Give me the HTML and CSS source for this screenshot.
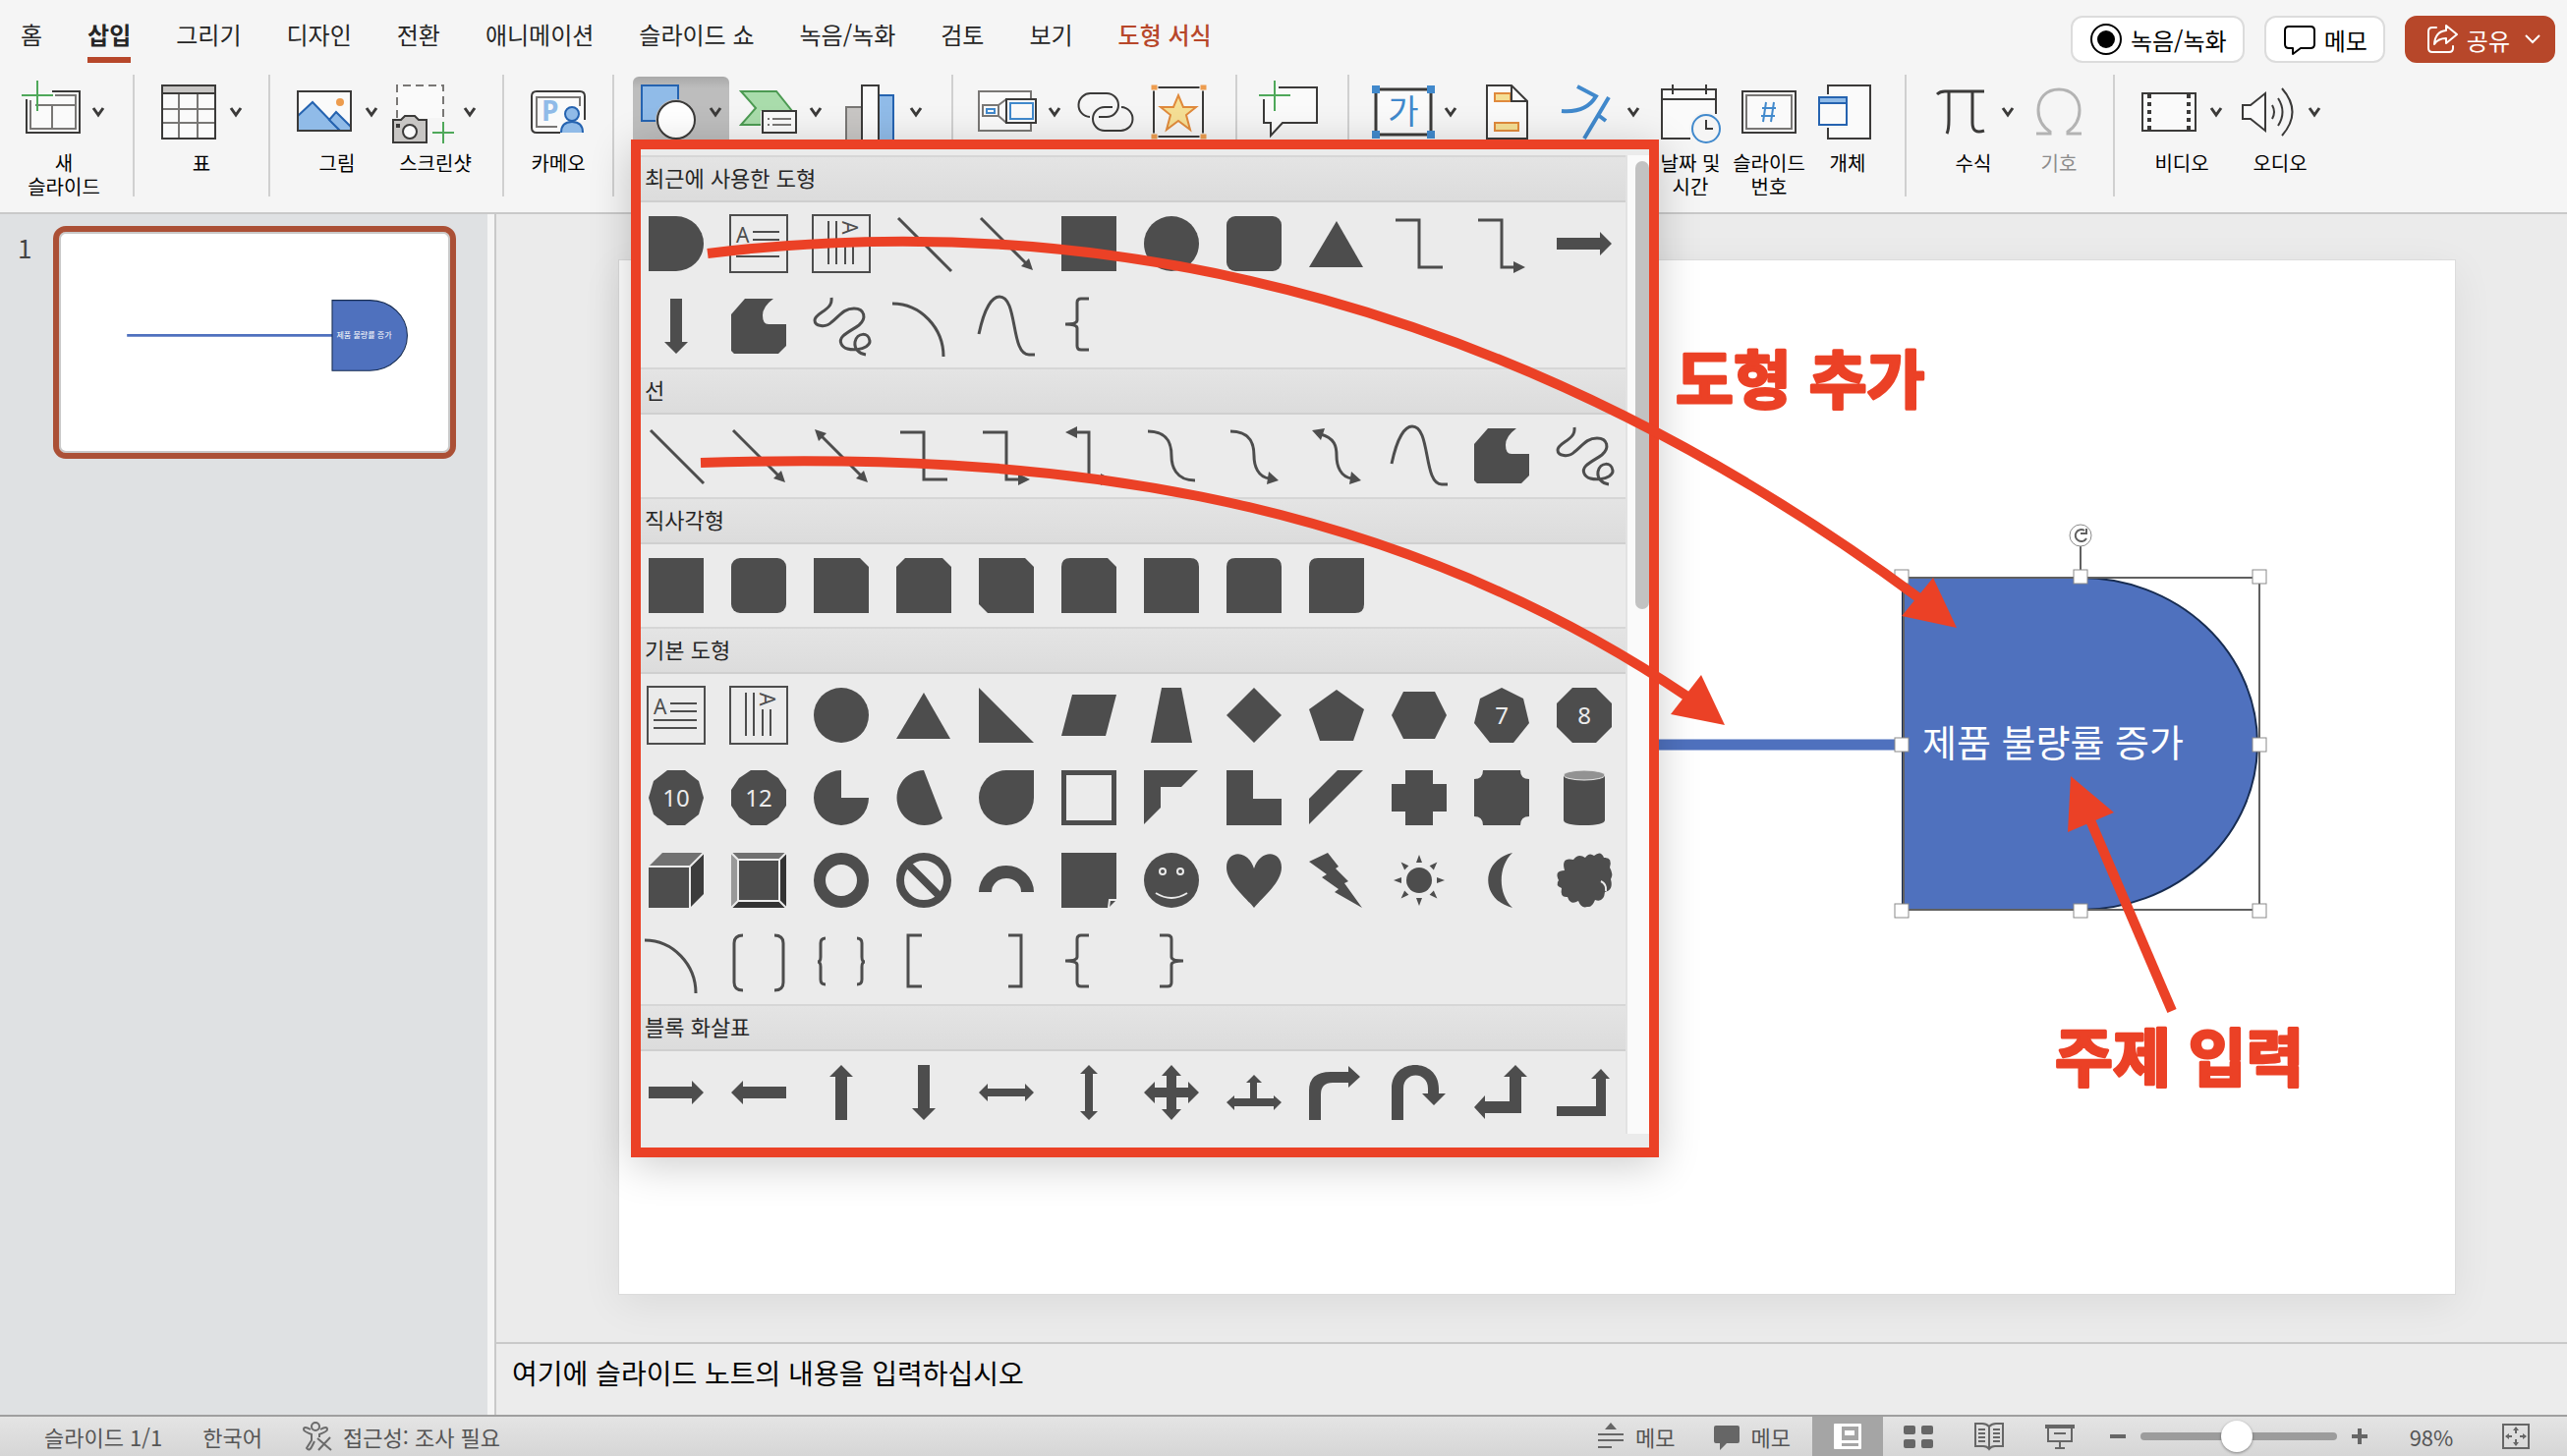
FILE: index.html
```html
<!DOCTYPE html>
<html lang="ko">
<head>
    <meta charset="UTF-8">
    <meta name="viewport" content="width=device-width, initial-scale=1.0">
    <title>프레젠테이션</title>
    <link rel="stylesheet" href="styles.css">
</head>
<body>
<div class="app">
    <header class="ribbon">
        <div class="ribbon-top">
            <nav class="tabs">
                <a href="#">홈</a>
                <a href="#" class="current">삽입</a>
                <a href="#">그리기</a>
                <a href="#">디자인</a>
                <a href="#">전환</a>
                <a href="#">애니메이션</a>
                <a href="#">슬라이드 쇼</a>
                <a href="#">녹음/녹화</a>
                <a href="#">검토</a>
                <a href="#">보기</a>
                <a href="#" class="context">도형 서식</a>
            </nav>
            <div class="actions">
                <button type="button" class="pill">
                    <svg width="32" height="32" viewBox="0 0 32 32"><circle cx="16" cy="16" r="15" fill="none" stroke="#000" stroke-width="2"/><circle cx="16" cy="16" r="9"/></svg>
                    녹음/녹화
                </button>
                <button type="button" class="pill">
                    <svg width="32" height="32" viewBox="0 0 32 32" fill="none" stroke="#000" stroke-width="2" stroke-linejoin="round"><path d="M5 3H27Q31 3 31 7V21Q31 25 27 25H17L9 31V25H5Q1 25 1 21V7Q1 3 5 3Z"/></svg>
                    메모
                </button>
                <button type="button" class="pill share">
                    <svg width="32" height="32" viewBox="0 0 32 32" fill="none" stroke="#fff" stroke-width="2" stroke-linejoin="round" stroke-linecap="round"><path d="M10 4H6Q2 4 2 8V25Q2 29 6 29H23Q27 29 27 25V23"/><path d="M20 2L31 11L20 20V15Q12 15 8 21Q9 8 20 7Z"/></svg>
                    공유
                    <svg class="share-caret" width="16" height="10" viewBox="0 0 16 10" fill="none" stroke="#fff" stroke-width="2"><path d="M1 1L8 8L15 1"/></svg>
                </button>
            </div>
        </div>

        <div class="tools">
            <div class="group">
                <button type="button" class="tool">
                    <span class="face">
                        <svg class="icon" viewBox="0 0 60 64"><path d="M5 17V53H59V11H30M5 17H16" fill="#fafafa"/><path d="M5 19V53H59V11H31" class="ink"/><path d="M9 20V49H55V15H34M14 25H55M31 25V49" class="gray"/><path d="M0 15H32M16 0V31" class="green"/></svg>
                        <svg class="caret" viewBox="0 0 16 12"><path d="M3 2L8 9L13 2"/></svg>
                    </span>
                    <span class="label">새<br>슬라이드</span>
                </button>
            </div>
            <div class="group">
                <button type="button" class="tool">
                    <span class="face">
                        <svg class="icon" viewBox="0 0 60 64"><rect x="3" y="5" width="54" height="54" fill="#fafafa"/><rect x="3" y="5" width="54" height="8" fill="#c8c6c4"/><path d="M3 29H57M3 43H57M20 13V59M39 13V59" class="gray"/><path d="M3 5H57V59H3ZM3 13H57" class="ink"/></svg>
                        <svg class="caret" viewBox="0 0 16 12"><path d="M3 2L8 9L13 2"/></svg>
                    </span>
                    <span class="label">표</span>
                </button>
            </div>
            <div class="group">
                <button type="button" class="tool">
                    <span class="face">
                        <svg class="icon" viewBox="0 0 60 64"><rect x="3" y="11" width="54" height="40" fill="#fafafa"/><path d="M3 36L18 22L46 51H3Z" class="blue"/><path d="M35 40L42 32L57 47V51H46Z" class="blue"/><circle cx="46" cy="22" r="4" fill="#ed9c4e"/><rect x="3" y="11" width="54" height="40" class="ink"/></svg>
                        <svg class="caret" viewBox="0 0 16 12"><path d="M3 2L8 9L13 2"/></svg>
                    </span>
                    <span class="label">그림</span>
                </button>
                <button type="button" class="tool">
                    <span class="face">
                        <svg class="icon" viewBox="0 0 60 64"><path d="M4 5H51V38H4Z" fill="#fafafa"/><path d="M4 38V5H51V38" class="gray" stroke-dasharray="8 5"/><path d="M0 40H8L12 36H22L26 40H34V63H0Z" fill="#c8c6c4" stroke="#3b3a39" stroke-width="2"/><circle cx="17" cy="52" r="7" fill="#fafafa" stroke="#3b3a39" stroke-width="2"/><rect x="3" y="44" width="4" height="4" fill="#3b3a39"/><path d="M40 53H62M51 42V64" class="green"/></svg>
                        <svg class="caret" viewBox="0 0 16 12"><path d="M3 2L8 9L13 2"/></svg>
                    </span>
                    <span class="label">스크린샷</span>
                </button>
            </div>
            <div class="group">
                <button type="button" class="tool">
                    <span class="face">
                        <svg class="icon" viewBox="0 0 60 64"><path d="M32 53H8Q3 53 3 48V16Q3 11 8 11H52Q57 11 57 16V40" fill="#fafafa" stroke="#3b3a39" stroke-width="2"/><path d="M29 47H8V17H52V26" class="gray"/><text x="13" y="41" class="icon-p">P</text><circle cx="44" cy="34" r="7" class="blue"/><path d="M33 53Q33 42 44 42Q55 42 55 53" class="blue"/></svg>
                    </span>
                    <span class="label">카메오</span>
                </button>
            </div>
            <div class="group charts">
                <button type="button" class="tool active" aria-label="도형" aria-expanded="true">
                    <span class="face">
                        <svg class="icon" viewBox="0 0 60 64"><rect x="3" y="5" width="37" height="36" class="blue"/><circle cx="38" cy="40" r="21" fill="#bdbdbd"/><circle cx="38" cy="40" r="19" fill="#fff" stroke="#3b3a39" stroke-width="2"/></svg>
                        <svg class="caret" viewBox="0 0 16 12"><path d="M3 2L8 9L13 2"/></svg>
                    </span>
                </button>
                <button type="button" class="tool" aria-label="SmartArt">
                    <span class="face">
                        <svg class="icon" viewBox="0 0 60 64"><path d="M2 11H38L54 31L44 45H2L17 28Z" fill="#a9dcab" stroke="#4c9a52" stroke-width="2"/><rect x="22" y="31" width="37" height="24" fill="#f5f5f5"/><rect x="24" y="31" width="34" height="22" fill="#fafafa" stroke="#3b3a39" stroke-width="2"/><path d="M29 39H31M34 39H53M29 45H31M34 45H53" class="gray"/></svg>
                        <svg class="caret" viewBox="0 0 16 12"><path d="M3 2L8 9L13 2"/></svg>
                    </span>
                </button>
                <button type="button" class="tool" aria-label="차트">
                    <span class="face">
                        <svg class="icon" viewBox="0 0 60 64"><rect x="7" y="27" width="16" height="36" fill="#c8c6c4" stroke="#797775" stroke-width="2"/><rect x="39" y="15" width="16" height="48" class="blue"/><rect x="23" y="5" width="17" height="58" fill="#fafafa" stroke="#3b3a39" stroke-width="2"/></svg>
                        <svg class="caret" viewBox="0 0 16 12"><path d="M3 2L8 9L13 2"/></svg>
                    </span>
                </button>
            </div>
            <div class="group wide">
                <button type="button" class="tool" aria-label="확대/축소">
                    <span class="face">
                        <svg class="icon" viewBox="0 0 60 64"><rect x="1" y="11" width="53" height="40" fill="#fafafa" stroke="#797775" stroke-width="2"/><rect x="5" y="25" width="16" height="11" class="gray"/><path d="M21 25L29 19M21 36L29 43" class="gray"/><rect x="29" y="19" width="30" height="24" fill="#fafafa" stroke="#3b3a39" stroke-width="2"/><rect x="33" y="23" width="23" height="16" class="sky"/><rect x="9" y="29" width="8" height="4" class="sky"/></svg>
                        <svg class="caret" viewBox="0 0 16 12"><path d="M3 2L8 9L13 2"/></svg>
                    </span>
                </button>
                <button type="button" class="tool" aria-label="링크">
                    <span class="face">
                        <svg class="icon" viewBox="0 0 60 64"><path d="M14 37A12 12 0 0 1 15 13H31A12 12 0 0 1 31 37H23" class="ink"/><path d="M37 27H29A12 12 0 0 0 29 51H45A12 12 0 0 0 46 27" class="ink"/></svg>
                    </span>
                </button>
                <button type="button" class="tool" aria-label="실행">
                    <span class="face">
                        <svg class="icon" viewBox="0 0 60 64"><rect x="5" y="7" width="50" height="50" class="ink"/><path d="M2 4H9V10H2ZM52 4H59V10H52ZM2 54H9V60H2ZM52 54H59V60H52Z" fill="#ed9c4e" stroke="#f5f5f5" stroke-width="1"/><path d="M30 15L35 27H48L38 35L42 50L30 41L18 50L22 35L12 27H25Z" fill="#f5df95" stroke="#e08a3c" stroke-width="2"/></svg>
                    </span>
                </button>
            </div>
            <div class="group comment">
                <button type="button" class="tool" aria-label="새 메모">
                    <span class="face">
                        <svg class="icon" viewBox="0 0 60 64"><path d="M5 19V43H12V56L25 43H60V7H20" fill="#fafafa"/><path d="M5 19V43H12V56L24 43H59V7H20" class="ink"/><path d="M0 15H32M16 0V31" class="green"/></svg>
                    </span>
                </button>
            </div>
            <div class="group wide spaced">
                <button type="button" class="tool" aria-label="텍스트 상자">
                    <span class="face">
                        <svg class="icon" viewBox="0 0 60 64"><rect x="2" y="9" width="56" height="46" fill="#fafafa" stroke="#3b3a39" stroke-width="3"/><path d="M-2 5H6V13H-2ZM54 5H62V13H54ZM-2 51H6V59H-2ZM54 51H62V59H54Z" fill="#4189cc"/><text x="30" y="44" class="icon-ga">가</text></svg>
                        <svg class="caret" viewBox="0 0 16 12"><path d="M3 2L8 9L13 2"/></svg>
                    </span>
                </button>
                <button type="button" class="tool" aria-label="머리글/바닥글">
                    <span class="face">
                        <svg class="icon" viewBox="0 0 60 64"><path d="M9 5H34L50 21V59H9Z" fill="#fafafa"/><path d="M17 13H33V21H17ZM17 43H41V51H17Z" fill="#f5df95" stroke="#e08a3c" stroke-width="2"/><path d="M9 5H34L50 21V59H9ZM34 5V21H50" class="ink"/></svg>
                    </span>
                </button>
                <button type="button" class="tool" aria-label="WordArt">
                    <span class="face">
                        <svg class="icon" viewBox="0 0 60 64" fill="none" stroke="#4189cc" stroke-width="4"><path d="M21 6L40 16Q30 33 5 31"/><path d="M53 17L28 59M42 35L50 41"/></svg>
                        <svg class="caret" viewBox="0 0 16 12"><path d="M3 2L8 9L13 2"/></svg>
                    </span>
                </button>
                <button type="button" class="tool">
                    <span class="face">
                        <svg class="icon" viewBox="0 0 60 64"><path d="M1 9H56V59H1Z" fill="#fafafa"/><path d="M56 34V9H1V59H30M1 19H56M12 4V14M46 4V14" class="ink"/><circle cx="46" cy="49" r="17" fill="#f5f5f5"/><circle cx="46" cy="49" r="14" class="sky"/><path d="M46 40V49H53" class="ink"/></svg>
                    </span>
                    <span class="label">날짜 및<br>시간</span>
                </button>
                <button type="button" class="tool">
                    <span class="face">
                        <svg class="icon" viewBox="0 0 60 64"><rect x="3" y="11" width="54" height="42" fill="#fafafa" stroke="#3b3a39" stroke-width="2"/><rect x="7" y="15" width="46" height="34" class="gray"/><path d="M27 22L24 42M35 22L32 42M23 28H37M22 36H36" class="sky"/></svg>
                    </span>
                    <span class="label">슬라이드<br>번호</span>
                </button>
                <button type="button" class="tool">
                    <span class="face">
                        <svg class="icon" viewBox="0 0 60 64"><path d="M10 5H53V59H10V48H30V14H10Z" fill="#fafafa"/><path d="M10 14V5H53V59H10V48" class="ink"/><rect x="1" y="17" width="28" height="28" fill="#fafafa"/><rect x="1" y="17" width="28" height="6" fill="#90bbe8"/><path d="M1 17H29V45H1ZM1 23H29" stroke="#2563b0" stroke-width="2" fill="none"/></svg>
                    </span>
                    <span class="label">개체</span>
                </button>
            </div>
            <div class="group">
                <button type="button" class="tool">
                    <span class="face">
                        <svg class="icon" viewBox="0 0 60 64" fill="none" stroke="#3b3a39" stroke-width="3"><path d="M6 14Q9 11 14 11H54M18 11V40Q18 50 16 54M42 11V43Q42 55 54 51"/></svg>
                        <svg class="caret" viewBox="0 0 16 12"><path d="M3 2L8 9L13 2"/></svg>
                    </span>
                    <span class="label">수식</span>
                </button>
                <button type="button" class="tool" disabled>
                    <span class="face">
                        <svg class="icon" viewBox="0 0 60 64" fill="none" stroke="#b3b3b3" stroke-width="3"><path d="M7 54H21V52C12 46 9 38 9 30C9 18 17 9 30 9C43 9 51 18 51 30C51 38 48 46 39 52V54H53"/></svg>
                    </span>
                    <span class="label">기호</span>
                </button>
            </div>
            <div class="group">
                <button type="button" class="tool">
                    <span class="face">
                        <svg class="icon" viewBox="0 0 60 64"><rect x="3" y="13" width="54" height="38" fill="#fafafa" stroke="#3b3a39" stroke-width="2"/><path d="M10 14V50M50 14V50" stroke="#3b3a39" stroke-width="4" stroke-dasharray="4 4" fill="none"/></svg>
                        <svg class="caret" viewBox="0 0 16 12"><path d="M3 2L8 9L13 2"/></svg>
                    </span>
                    <span class="label">비디오</span>
                </button>
                <button type="button" class="tool">
                    <span class="face">
                        <svg class="icon" viewBox="0 0 60 64"><path d="M5 25H13L28 13V51L13 39H5Z" fill="#fafafa" stroke="#3b3a39" stroke-width="2"/><path d="M35 25Q39 32 35 39M41 18Q50 32 41 46M45 8Q66 32 45 56" class="ink"/></svg>
                        <svg class="caret" viewBox="0 0 16 12"><path d="M3 2L8 9L13 2"/></svg>
                    </span>
                    <span class="label">오디오</span>
                </button>
            </div>
        </div>
    </header>

    <div class="workspace">
        <aside class="slides">
            <span class="slide-number">1</span>
            <button type="button" class="thumb" aria-label="슬라이드 1">
                <svg viewBox="0 0 1870 1052">
                    <path d="M322 493H1308" stroke="#4f71be" stroke-width="12"/>
                    <path d="M1308 324H1489A180 169 0 0 1 1489 662H1308Z" fill="#4f71be" stroke="#172c51" stroke-width="5"/>
                    <text x="1329" y="507" class="slide-text">제품 불량률 증가</text>
                </svg>
            </button>
        </aside>
        <main class="editor">
            <div class="canvas">
                <div class="slide">
                    <svg viewBox="0 0 1868 1052">
                        <path d="M320 493H1306" stroke="#4f71be" stroke-width="11"/>
                        <path d="M1306 323H1487A180 169 0 0 1 1487 661H1306Z" fill="#4f71be" stroke="#172c51" stroke-width="2"/>
                        <text x="1326" y="505" class="slide-text">제품 불량률 증가</text>
                        <path d="M1307 323H1669V661H1307ZM1487 323V291" fill="none" stroke="#606060" stroke-width="2"/>
                        <g class="handles">
                            <rect x="1298" y="315" width="14" height="14"/>
                            <rect x="1480" y="315" width="14" height="14"/>
                            <rect x="1662" y="315" width="14" height="14"/>
                            <rect x="1298" y="486" width="14" height="14"/>
                            <rect x="1662" y="486" width="14" height="14"/>
                            <rect x="1298" y="655" width="14" height="14"/>
                            <rect x="1480" y="655" width="14" height="14"/>
                            <rect x="1662" y="655" width="14" height="14"/>
                            <circle cx="1487" cy="280" r="11"/>
                        </g>
                        <path d="M1491 275A6 6 0 1 0 1493 283M1493 273V278H1487" fill="none" stroke="#606060" stroke-width="2"/>
                    </svg>
                </div>
            </div>
            <textarea class="notes" aria-label="슬라이드 노트" placeholder="여기에 슬라이드 노트의 내용을 입력하십시오"></textarea>
        </main>
    </div>

    <footer class="status">
        <span class="status-item">슬라이드 1/1</span>
        <button type="button" class="status-item lang">한국어</button>
        <button type="button" class="status-item">
            <svg width="32" height="32" viewBox="0 0 32 32" fill="none" stroke="#6b6b6b" stroke-width="2"><circle cx="14" cy="6" r="4"/><path d="M9 9Q2 5 2 9Q2 11 10 14V20L5 28Q8 32 11 25L13 21M19 9Q26 5 26 9Q26 11 18 14V17M16 18L30 30M29 17L17 30"/></svg>
            접근성: 조사 필요
        </button>
        <div class="views">
            <button type="button" class="status-item notes-toggle">
                <svg width="28" height="28" viewBox="0 0 28 28"><path d="M8 7L14 0L20 7Z" fill="#666"/><path d="M1 12H27M1 18H27M1 25H15" stroke="#666" stroke-width="2"/></svg>
                메모
            </button>
            <button type="button" class="status-item memo-toggle">
                <svg width="28" height="28" viewBox="0 0 28 28"><path d="M3 3H25Q27 3 27 5V19Q27 21 25 21H14L7 28V21H3Q1 21 1 19V5Q1 3 3 3Z" fill="#666"/></svg>
                메모
            </button>
            <button type="button" class="view on" aria-label="기본">
                <svg width="30" height="30" viewBox="0 0 30 30"><rect x="1" y="2" width="28" height="26" rx="1" fill="#fff"/><path d="M9 5H26V19H9ZM9 22H26V25H9Z" fill="#a5a5a5"/><path d="M12 9H22V14H12Z" fill="#fff"/></svg>
            </button>
            <button type="button" class="view" aria-label="여러 슬라이드">
                <svg width="30" height="30" viewBox="0 0 30 30" fill="#666"><rect x="0" y="4" width="12" height="9" rx="2"/><rect x="18" y="4" width="12" height="9" rx="2"/><rect x="0" y="18" width="12" height="9" rx="2"/><rect x="18" y="18" width="12" height="9" rx="2"/></svg>
            </button>
            <button type="button" class="view" aria-label="읽기용 보기">
                <svg width="30" height="30" viewBox="0 0 30 30" fill="none" stroke="#666" stroke-width="2"><path d="M15 5Q12 2 8 2H1V25H9Q13 25 15 28Q17 25 21 25H29V2H22Q18 2 15 5ZM15 5V27M4 8H11M4 12H11M4 16H11M4 20H11M19 8H26M19 12H26M19 16H26M19 20H26"/></svg>
            </button>
            <button type="button" class="view" aria-label="슬라이드 쇼">
                <svg width="30" height="30" viewBox="0 0 30 30" fill="none" stroke="#666" stroke-width="2"><path d="M0 5H30" stroke-width="4"/><path d="M3 7V20H27V7M9 12H21M15 20V27M10 27H20"/></svg>
            </button>
            <button type="button" class="zoom-step" aria-label="축소"><svg width="18" height="18" viewBox="0 0 18 18"><path d="M1 9H17" stroke="#666" stroke-width="4"/></svg></button>
            <input type="range" class="zoom" min="0" max="100" value="49" aria-label="확대/축소 비율">
            <button type="button" class="zoom-step" aria-label="확대"><svg width="18" height="18" viewBox="0 0 18 18"><path d="M1 9H17M9 1V17" stroke="#666" stroke-width="4"/></svg></button>
            <button type="button" class="percent">98%</button>
            <button type="button" class="fit" aria-label="창에 맞춤">
                <svg width="28" height="28" viewBox="0 0 28 28" fill="none" stroke="#666" stroke-width="2"><rect x="1" y="2" width="26" height="24"/><path d="M14 5V11M14 17V23M4 14H10M18 14H24"/><path d="M14 4L17 8H11ZM14 24L17 20H11ZM3 14L7 11V17ZM25 14L21 11V17Z" fill="#666" stroke="none"/></svg>
            </button>
        </div>
    </footer>

    <!-- shape gallery -->
    <div class="gallery">
        <div class="gallery-list" id="gallery"></div>
        <div class="scroll-track"><div class="scroll-thumb"></div></div>
    </div>

    <!-- red guide arrows and captions -->
    <svg class="guide">
        <g fill="none" stroke="#eb4126" stroke-width="10">
            <path d="M720 258C1140 206 1561 318 1953 609"/>
            <path d="M713 471C1050 460 1400 495 1717 709"/>
            <path d="M2210 1029L2127 835"/>
        </g>
        <g fill="#eb4126">
            <path d="M1967 588L1991 639L1935 627Z"/>
            <path d="M1731 687L1755 738L1700 727Z"/>
            <path d="M2107 790L2151 827L2104 847Z"/>
        </g>
        <text x="1705" y="410">도형 추가</text>
        <text x="2091" y="1100">주제 입력</text>
    </svg>
</div>

<script>
    const line = d => `<path class="stroke" d="${d}"/>`;
    const fill = d => `<path d="${d}"/>`;
    const badge = (d, n) => fill(d) + `<text class="badge" x="28" y="37">${n}</text>`;
    const textLines = '<path class="stroke thin" d="M-1 -1H57V57H-1Z"/>';
    const textBody = '<path class="stroke thin" d="M22 16H49M22 24H49M5 33H49M5 41H49"/><text class="letter" x="5" y="27">A</text>';

    const shapes = {
        delay: fill('M0 0H28A28 28 0 0 1 28 56H0Z'),
        textBox: textLines + textBody,
        textBoxV: textLines + `<g transform="rotate(90 28 28)">${textBody}</g>`,
        line: line('M2 2L56 56'),
        arrow: line('M2 2L50 50') + fill('M55 55L43 51L51 43Z'),
        arrow2: line('M6 6L50 50') + fill('M55 55L43 51L51 43Z M1 1L13 5L5 13Z'),
        rect: fill('M0 0H56V56H0Z'),
        ellipse: '<circle cx="28" cy="28" r="28"/>',
        round: '<rect width="56" height="56" rx="9"/>',
        triangle: fill('M28 5L55 52H0Z'),
        elbow: line('M4 4H28V52H52'),
        elbowArrow: line('M4 4H28V52H42') + fill('M52 52L40 46V58Z'),
        elbowArrow2: line('M14 4H28V52H42') + fill('M52 52L40 46V58Z M4 4L16 -2V10Z'),
        curved: line('M4 3C26 3 28 18 28 28S32 53 52 53'),
        curvedArrow: line('M4 3C26 3 28 18 28 28S32 50 44 51') + fill('M53 53L41 57L43 44Z'),
        curvedArrow2: line('M12 6C26 10 28 18 28 28S32 50 44 51') + fill('M53 53L41 57L43 44Z M3 2L16 0L12 12Z'),
        right: fill('M0 22H44V16L56 28L44 40V34H0Z'),
        left: fill('M56 22H12V16L0 28L12 40V34H56Z'),
        down: fill('M22 0V44H16L28 56L40 44H34V0Z'),
        up: fill('M22 56V12H16L28 0L40 12H34V56Z'),
        freeform: fill('M14 0H43Q32 8 32 17Q32 26 38 26H56V48L48 56H3L0 53V16Z'),
        scribble: line('M18 -1C20 12 1 14 1 22C1 28 12 30 18 24C26 18 30 10 41 10C52 10 54 20 46 27C38 33 24 38 28 46C32 56 58 52 57 43C56 34 44 34 42 44C41 51 46 56 53 57'),
        arc: line('M-4 5C25 5 48 30 48 59'),
        curve: line('M0 36C6 8 14 -2 21 -2C40 -2 32 57 51 57H57'),
        leftBrace: line('M28 0H20Q16 0 16 4V22Q16 26 4 26Q16 26 16 30V48Q16 52 20 52H28'),
        rightBrace: line('M16 0H24Q28 0 28 4V22Q28 26 40 26Q28 26 28 30V48Q28 52 24 52H16'),
        snip1: fill('M0 0H47L56 9V56H0Z'),
        snip2: fill('M9 0H47L56 9V56H0V9Z'),
        snipDiag: fill('M0 0H47L56 9V56H9L0 47Z'),
        snipRound: fill('M9 0H47L56 9V56H0V9Q0 0 9 0Z'),
        round1: fill('M0 0H47Q56 0 56 9V56H0Z'),
        round2: fill('M9 0H47Q56 0 56 9V56H0V9Q0 0 9 0Z'),
        roundDiag: fill('M9 0H56V47Q56 56 47 56H0V9Q0 0 9 0Z'),
        rightTriangle: fill('M0 0L56 56H0Z'),
        parallelogram: fill('M11 7H56L45 49H0Z'),
        trapezoid: fill('M18 0H38L49 56H7Z'),
        diamond: fill('M28 0L56 28L28 56L0 28Z'),
        pentagon: fill('M28 2L56 22L45 54H11L0 22Z'),
        hexagon: fill('M12 4H44L56 28L44 52H12L0 28Z'),
        heptagon: badge('M28 0L50 11L56 36L40 56H16L0 36L6 11Z', 7),
        octagon: badge('M16 0H40L56 16V40L40 56H16L0 40V16Z', 8),
        decagon: badge('M19 0H37L51 11L56 28L51 45L37 56H19L5 45L0 28L5 11Z', 10),
        dodecagon: badge('M20 0H36L48 8L56 20V36L48 48L36 56H20L8 48L0 36V20L8 8Z', 12),
        pie: fill('M28 28V0A28 28 0 1 0 56 28Z'),
        chord: fill('M28 0A28 28 0 1 0 47 49Z'),
        teardrop: fill('M56 0H28A28 28 0 1 0 56 28Z'),
        frame: fill('M0 0H56V56H0ZM5 5V51H51V5Z'),
        halfFrame: fill('M0 0H55L38 17H17V38L0 55Z'),
        corner: fill('M0 0H27V29H56V56H0Z'),
        stripe: fill('M29 0H55L0 55V29Z'),
        cross: fill('M14 0H42V14H56V42H42V56H14V42H0V14H14Z'),
        plaque: fill('M9 0H47Q47 9 56 9V47Q47 47 47 56H9Q9 47 0 47V9Q9 9 9 0Z'),
        can: fill('M7 5V51Q8 56 28 56T49 51V5Z') + '<ellipse cx="28" cy="5" rx="21" ry="5" fill="#929292" stroke="#ebebeb" stroke-width="1"/>',
        cube: fill('M0 14H42V56H0Z') + '<path fill="#717171" d="M0 14L14 0H56L42 14Z"/><path fill="#3c3c3c" d="M42 14L56 0V42L42 56Z"/><path class="light" d="M0 14H42V56M42 14L56 0"/>',
        bevel: fill('M0 0H56V56H0Z') + '<path fill="#707070" d="M0 0H56L49 7H7Z"/><path fill="#999" d="M0 0L7 7V49L0 56Z"/><path fill="#333" d="M56 0V56H0L7 49H49V7Z"/><path class="light" d="M7 7H49V49H7ZM0 0L7 7M56 0L49 7M0 56L7 49M56 56L49 49"/>',
        donut: '<circle class="hole" cx="28" cy="28" r="22" stroke-width="12"/>',
        forbidden: '<circle class="hole" cx="28" cy="28" r="24" stroke-width="8"/><path class="hole" stroke-width="8" d="M12 12L44 44"/>',
        blockArc: fill('M0 40A28 27 0 0 1 56 40H43A15 14 0 0 0 13 40Z'),
        folded: fill('M0 0H56V48L48 56H0Z') + '<path class="light" d="M48 56L49 48H56"/>',
        smiley: '<circle cx="28" cy="28" r="28"/><circle class="light" cx="19" cy="19" r="3"/><circle class="light" cx="37" cy="19" r="3"/><path class="light" d="M12 41Q28 51 44 41"/>',
        heart: fill('M28 16C34 -4 56 -3 56 15C56 30 38 44 28 56C18 44 0 30 0 15C0 -3 22 -4 28 16Z'),
        bolt: fill('M19 0L30 14L27 16L40 29L36 31L54 56L26 40L30 37L13 25L18 22L0 9Z'),
        sun: '<circle cx="28" cy="28" r="13"/>' + [0, 45, 90, 135, 180, 225, 270, 315].map(a => `<path transform="rotate(${a} 28 28)" d="M28 2L31 10H25Z"/>`).join(''),
        moon: fill('M39 0C6 8 6 48 39 56C24 42 24 14 39 0Z'),
        cloud: fill('M8 18Q4 4 17 7Q22 0 29 5Q33 -1 38 3Q45 -3 48 5Q57 4 54 15Q58 22 55 27Q58 38 49 40Q48 51 39 48Q36 56 31 55Q25 57 22 49Q14 54 11 45Q3 46 5 36Q-2 33 2 28Q-3 18 8 18Z') + '<path class="light" d="M45 29Q51 32 50 39"/>',
        bracketPair: line('M12 0Q3 0 3 8V48Q3 56 12 56M44 0Q53 0 53 8V48Q53 56 44 56'),
        bracePair: line('M12 3Q7 3 7 8V22Q7 27 4 27Q7 27 7 32V45Q7 50 12 50M44 3Q49 3 49 8V22Q49 27 52 27Q49 27 49 32V45Q49 50 44 50'),
        leftBracket: line('M26 0H12V52H26'),
        rightBracket: line('M30 0H43V52H30'),
        leftRight: fill('M0 28L9 19V24H47V19L56 28L47 37V32H9V37Z'),
        upDown: fill('M28 0L37 9H32V47H37L28 56L19 47H24V9H19Z'),
        quad: fill('M28 0L38 11H33V23H45V17L56 28L45 39V33H33V45H38L28 56L18 45H23V33H11V39L0 28L11 17V23H23V11H18Z'),
        leftRightUp: fill('M28 10L36 18H31V34H48V31L56 38L48 46V42H8V46L0 38L8 31V34H24V18H20Z'),
        bent: fill('M0 56V26Q0 7 22 7H40V1L52 12L40 23V18H24Q12 18 12 30V56Z'),
        uTurn: fill('M0 56V24C0 -8 48 -8 48 24V29H55L43 41L31 29H37V24C37 6 12 6 12 24V56Z'),
        leftUp: fill('M0 43L11 31V37H36V12H30L42 0L54 12H48V49H11V55Z'),
        bentUp: fill('M0 42H40V14H35L45 4L54 14H50V52H0Z')
    };

    const sections = [
        ['최근에 사용한 도형', 'delay textBox textBoxV line arrow rect ellipse round triangle elbow elbowArrow right down freeform scribble arc curve leftBrace'],
        ['선', 'line arrow arrow2 elbow elbowArrow elbowArrow2 curved curvedArrow curvedArrow2 curve freeform scribble'],
        ['직사각형', 'rect round snip1 snip2 snipDiag snipRound round1 round2 roundDiag'],
        ['기본 도형', 'textBox textBoxV ellipse triangle rightTriangle parallelogram trapezoid diamond pentagon hexagon heptagon octagon decagon dodecagon pie chord teardrop frame halfFrame corner stripe cross plaque can cube bevel donut forbidden blockArc folded smiley heart bolt sun moon cloud arc bracketPair bracePair leftBracket rightBracket leftBrace rightBrace'],
        ['블록 화살표', 'right left up down leftRight upDown quad leftRightUp bent uTurn leftUp bentUp']
    ];

    document.getElementById('gallery').innerHTML = sections.map(([title, names]) => `
        <h2>${title}</h2>
        <div class="shape-grid">
            ${names.split(' ').map(name => `<button type="button" aria-label="${name}"><svg viewBox="0 0 56 56">${shapes[name]}</svg></button>`).join('')}
        </div>
    `).join('');
</script>
</body>
</html>
```
FILE: styles.css
```css
* {
    box-sizing: border-box;
}

body {
    margin: 0;
    font-family: "Noto Sans CJK KR", "Noto Sans", sans-serif;
    color: #262626;
    background: #ebebeb;
}

button {
    margin: 0;
    padding: 0;
    border: none;
    background: none;
    font: inherit;
    color: inherit;
}

svg {
    display: block;
    flex: none;
    overflow: visible;
}

.app {
    position: relative;
    display: flex;
    flex-direction: column;
    min-height: 100vh;
    overflow: hidden;
}

/* Ribbon */
.ribbon {
    height: 218px;
    background: #f5f5f5;
    border-bottom: 2px solid #c9c9c9;
}

.ribbon-top {
    display: flex;
    justify-content: space-between;
    height: 76px;
    padding: 16px 12px 0 21px;
}

.tabs {
    display: flex;
    gap: 46px;
    font-size: 24px;
    line-height: 38px;
}

.tabs a {
    height: 48px;
    color: #262626;
    text-decoration: none;
    white-space: nowrap;
}

.tabs .current {
    font-weight: 700;
    background: linear-gradient(#b7472a, #b7472a) bottom / 100% 6px no-repeat;
}

.tabs .context {
    color: #b7472a;
    font-weight: 500;
}

.actions {
    display: flex;
    gap: 20px;
}

.pill {
    display: flex;
    align-items: center;
    gap: 9px;
    height: 48px;
    padding: 0 16px 0 18px;
    border: 2px solid #dcdcdc;
    border-radius: 12px;
    background: #fff;
    color: #000;
    font-size: 24px;
    white-space: nowrap;
}

.share {
    padding: 0 13px 0 20px;
    border-color: #b7472a;
    background: #b7472a;
    color: #fff;
}

.share-caret {
    margin-left: 6px;
}

.tools {
    display: flex;
    height: 124px;
}

.group {
    display: flex;
    gap: 14px;
    padding: 6px 25px 0;
    border-right: 2px solid #d0d0d0;
}

.group:first-child {
    padding-left: 22px;
    padding-right: 27px;
}

.group:last-child {
    border-right: none;
}

.group.wide,
.group.charts {
    padding-right: 28px;
}

.group.charts {
    gap: 16px;
}

.group.comment {
    padding-left: 22px;
    padding-right: 30px;
}

.group.spaced {
    gap: 20px;
}

.tool {
    display: flex;
    flex-direction: column;
    align-items: center;
    color: #000;
}

.face {
    display: flex;
    align-items: center;
    gap: 10px;
    margin: -4px -6px;
    padding: 4px 6px;
    border-radius: 6px;
}

.active .face {
    background: linear-gradient(#a9a9a9, #bdbdbd 12px);
}

.icon {
    width: 60px;
    height: 64px;
}

.caret {
    width: 16px;
    height: 12px;
    fill: none;
    stroke: #3b3a39;
    stroke-width: 3;
}

.label {
    display: flex;
    justify-content: center;
    width: 0;
    margin-top: 8px;
    font-size: 20px;
    line-height: 24px;
    text-align: center;
    white-space: nowrap;
}

.tool:disabled {
    color: #8c8c8c;
}

.ink { fill: none; stroke: #3b3a39; stroke-width: 2; }
.gray { fill: none; stroke: #797775; stroke-width: 2; }
.green { fill: none; stroke: #4fa85a; stroke-width: 2; }
.sky { fill: none; stroke: #4189cc; stroke-width: 2; }
.blue { fill: #90bbe8; stroke: #2563b0; stroke-width: 2; }

.icon-p {
    font: 700 28px "Noto Sans", sans-serif;
    fill: #90bbe8;
}

.icon-ga {
    font-size: 34px;
    text-anchor: middle;
    fill: #4189cc;
}

/* Workspace */
.workspace {
    display: flex;
    flex: 1;
}

.slides {
    display: flex;
    align-items: flex-start;
    width: 505px;
    padding: 12px 0 0 18px;
    background: #dfe1e3;
    border-right: 2px solid #c9c9c9;
    box-shadow: inset -7px 0 #f5f5f5;
}

.slide-number {
    width: 36px;
    padding-top: 6px;
    font-size: 26px;
    line-height: 32px;
    color: #444;
}

.thumb {
    width: 410px;
    padding: 1px;
    border: 6px solid #ab5036;
    border-radius: 13px;
    background: #fff;
    box-shadow: inset 0 0 0 2px #c9c9c9;
}

.thumb svg {
    width: 100%;
}

.slide-text {
    font-size: 38px;
    fill: #fff;
}

.editor {
    display: flex;
    flex: 1;
    flex-direction: column;
}

.canvas {
    flex: 1;
    padding: 47px 114px 49px 125px;
}

.slide {
    background: #fff;
    box-shadow: 0 0 0 1px #dcdcdc, 0 10px 40px rgba(0, 0, 0, 0.07);
}

.slide svg {
    width: 100%;
}

.handles {
    fill: #fff;
    stroke: #8a8a8a;
    stroke-width: 1;
}

.notes {
    height: 74px;
    padding: 13px 16px;
    border: none;
    border-top: 2px solid #c9c9c9;
    background: #ececec;
    font-family: inherit;
    font-size: 28px;
    line-height: 32px;
    resize: none;
}

.notes::placeholder {
    color: #000;
}

/* Status bar */
.status {
    display: flex;
    align-items: center;
    height: 42px;
    padding-left: 45px;
    border-top: 2px solid #9f9f9f;
    background: linear-gradient(#e4e4e4, #d6d6d6);
    color: #555;
    font-size: 22px;
    line-height: 40px;
    white-space: nowrap;
}

.status-item {
    display: flex;
    align-items: center;
    gap: 10px;
}

.lang {
    margin: 0 40px 0 41px;
}

.views {
    display: flex;
    align-items: center;
    margin-left: auto;
    padding-right: 38px;
}

.notes-toggle {
    margin-right: 38px;
}

.notes-toggle,
.memo-toggle {
    gap: 11px;
}

.memo-toggle {
    margin-right: 22px;
}

.view {
    display: flex;
    align-items: center;
    justify-content: center;
    width: 72px;
    height: 40px;
}

.view.on {
    background: #a5a5a5;
}

.zoom-step {
    margin: 0 14px;
}

.zoom {
    appearance: none;
    width: 200px;
    height: 32px;
    margin: 0;
    background: none;
}

.zoom::-webkit-slider-runnable-track {
    height: 8px;
    border-radius: 4px;
    background: #9c9c9c;
}

.zoom::-webkit-slider-thumb {
    appearance: none;
    width: 32px;
    height: 32px;
    margin-top: -12px;
    border-radius: 50%;
    background: #fff;
    box-shadow: 0 1px 3px rgba(0, 0, 0, 0.4);
}

.percent {
    width: 52px;
    margin: 0 46px 0 24px;
}

/* Shape gallery */
.gallery {
    position: absolute;
    top: 142px;
    left: 642px;
    display: flex;
    width: 1046px;
    padding: 6px 0 14px;
    border: 10px solid #eb4126;
    background: #ebebeb;
    box-shadow: 0 8px 40px rgba(0, 0, 0, 0.2);
}

.gallery-list {
    flex: 1;
}

.gallery h2 {
    height: 48px;
    margin: 0;
    padding-left: 4px;
    border-top: 2px solid #d6d6d6;
    border-bottom: 2px solid #cfcfcf;
    background: linear-gradient(#e4e4e4, #dcdcdc);
    font-size: 22px;
    font-weight: 400;
    line-height: 40px;
}

.shape-grid {
    display: grid;
    grid-template-columns: repeat(12, 84px);
    padding-left: 8px;
    margin-right: -14px;
}

.shape-grid button {
    display: flex;
    align-items: center;
    height: 84px;
}

.shape-grid svg {
    width: 56px;
    height: 56px;
    fill: #4d4d4d;
}

.stroke { fill: none; stroke: #4d4d4d; stroke-width: 3; }
.stroke.thin { stroke-width: 2; }
.hole { fill: none; stroke: #4d4d4d; }
.light { fill: none; stroke: #ebebeb; stroke-width: 2; }

.badge {
    font: 24px "Noto Sans", sans-serif;
    fill: #ebebeb;
    text-anchor: middle;
}

.letter {
    font: 21px "Noto Sans", sans-serif;
}

.scroll-track {
    width: 24px;
    padding: 6px 0 0 8px;
    border-left: 2px solid #e2e2e2;
    background: #fafafa;
}

.scroll-thumb {
    height: 456px;
    border-radius: 8px;
    background: #c2c2c2;
}

/* Guide */
.guide {
    position: absolute;
    top: 0;
    left: 0;
    width: 100%;
    height: 100%;
    pointer-events: none;
}

.guide text {
    font-size: 64px;
    font-weight: 700;
    fill: #eb4126;
    stroke: #eb4126;
    stroke-width: 3;
    stroke-linejoin: round;
}
```
